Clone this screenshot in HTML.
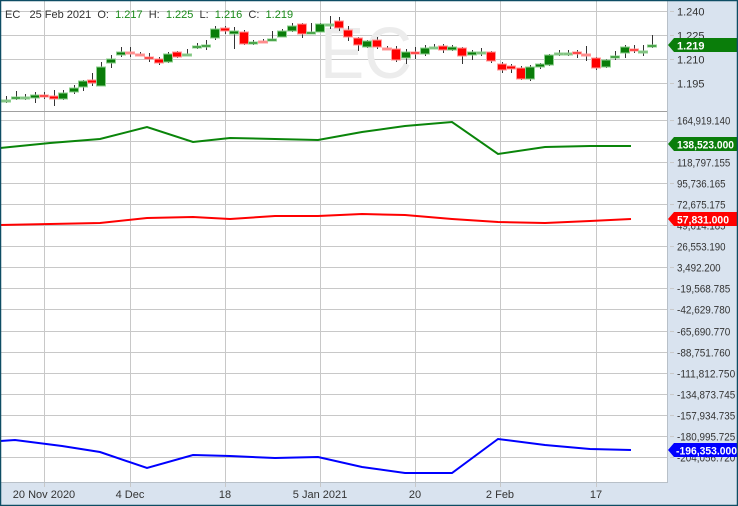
<!DOCTYPE html>
<html><head><meta charset="utf-8"><style>
html,body{margin:0;padding:0;background:#fff;}
#c{position:relative;width:738px;height:506px;overflow:hidden;font-family:"Liberation Sans",sans-serif;}
svg text{font-family:"Liberation Sans",sans-serif;}
</style></head><body><div id="c">
<svg id="s" width="738" height="506" xmlns="http://www.w3.org/2000/svg">
<rect x="0" y="0" width="738" height="506" fill="#fff"/>
<rect x="668" y="0" width="70" height="506" fill="#d9e3ef"/>
<rect x="0" y="483" width="738" height="23" fill="#d9e3ef"/>
<g id="grid" stroke="#c8c8c8" stroke-width="1"></g>
<line x1="0" y1="111.5" x2="668" y2="111.5" stroke="#a0a0a0"/>
<line x1="667.5" y1="0" x2="667.5" y2="483" stroke="#b8c0c8"/>
<line x1="0" y1="482.5" x2="668" y2="482.5" stroke="#b8c0c8"/>
<text x="320" y="78" font-size="72" fill="#ececec" textLength="92" lengthAdjust="spacingAndGlyphs">EC</text>
<g id="cand"></g>
<polyline fill="none" stroke="#0a850a" stroke-width="2" points="0,148 50,143 100,139 147,127 193,142 230,138 275,139 318,140 362,132 405,126 452,122 498,154 545,147 590,146 631,146"/>
<polyline fill="none" stroke="#ff0000" stroke-width="2" points="0,225 50,224 100,223 147,218 193,217 230,219 275,216 318,216 362,214 405,215 452,219 498,222 545,223 590,221 631,219"/>
<polyline fill="none" stroke="#0000ff" stroke-width="2" points="0,441 15,440 62,446 100,452 147,468 193,455 230,456 275,458 318,457 362,467 405,473 452,473 498,439 545,445 590,449 631,450"/>
<g id="lab" font-size="11" fill="#333"></g>
<text x="5" y="18" font-size="11" fill="#333">EC&#160;&#160;&#160;25 Feb 2021&#160;&#160;O:&#160;&#160;<tspan fill="#1a8a1a">1.217</tspan>&#160;&#160;H:&#160;&#160;<tspan fill="#1a8a1a">1.225</tspan>&#160;&#160;L:&#160;&#160;<tspan fill="#1a8a1a">1.216</tspan>&#160;&#160;C:&#160;&#160;<tspan fill="#1a8a1a">1.219</tspan></text>
<polygon points="668,45 674,38 738,38 738,52 674,52" fill="#0a7d0a"/>
<text x="677" y="49.5" font-size="11" font-weight="bold" fill="#fff">1.219</text>
<polygon points="668,144 674,137 738,137 738,151 674,151" fill="#0a7d0a"/>
<text x="677" y="148.5" font-size="11" font-weight="bold" fill="#fff" textLength="57" lengthAdjust="spacingAndGlyphs">138,523.000</text>
<polygon points="668,219 674,212 738,212 738,226 674,226" fill="#ff0000"/>
<text x="677" y="223.5" font-size="11" font-weight="bold" fill="#fff" textLength="52" lengthAdjust="spacingAndGlyphs">57,831.000</text>
<polygon points="668,450 674,443 738,443 738,457 674,457" fill="#0000ff"/>
<text x="676" y="454.5" font-size="11" font-weight="bold" fill="#fff" textLength="61" lengthAdjust="spacingAndGlyphs">-196,353.000</text>
<rect x="0.5" y="0.5" width="737" height="505" fill="none" stroke="#0e4d64" stroke-width="1.5"/>
</svg>
<script>
var NS="http://www.w3.org/2000/svg";
function el(p,t,a){var e=document.createElementNS(NS,t);for(var k in a)e.setAttribute(k,a[k]);p.appendChild(e);return e;}
var g=document.getElementById('grid'),lab=document.getElementById('lab');
var vx=[44,130,225,320,415,500,596],vl=["20 Nov 2020","4 Dec","18","5 Jan 2021","20","2 Feb","17"];
vx.forEach(function(x,i){el(g,'line',{x1:x+.5,y1:0,x2:x+.5,y2:487});var t=el(lab,'text',{x:x,y:498,'text-anchor':'middle'});t.textContent=vl[i];});
function ylab(y,s){el(g,'line',{x1:0,y1:y,x2:668,y2:y});el(g,'line',{x1:670,y1:y,x2:674,y2:y});var t=el(lab,'text',{x:677,y:y+4});if(s.length>5){t.setAttribute('textLength',(s.length*4.85).toFixed(1));t.setAttribute('lengthAdjust','spacingAndGlyphs');}t.textContent=s;}
[[11,"1.240"],[35,"1.225"],[59,"1.210"],[83,"1.195"]].forEach(function(a){ylab(a[0]+.5,a[1]);});
var L=["164,919.140","141,858.150","118,797.155","95,736.165","72,675.175","49,614.185","26,553.190","3,492.200","-19,568.785","-42,629.780","-65,690.770","-88,751.760","-111,812.750","-134,873.745","-157,934.735","-180,995.725","-204,056.720"];
L.forEach(function(s,i){ylab(Math.round(119.5+21.1*i)+.5,s);});
var C=[[6,100,100,96,103,'d'],[16,97,98,91,100,'g'],[25,97,97,94,100,'d'],[35,95,98,92,103,'g'],[44,95,96,92,99,'r'],[54,96,99,90,106,'r'],[63,93,99,90,100,'g'],[74,88,92,85,94,'g'],[83,81,87,80,91,'g'],[92,80,83,73,86,'r'],[101,67,86,62,86,'g'],[111,59,63,55,68,'g'],[121,52,55,47,57,'g'],[130,52,53,47,57,'dr'],[140,54,55,52,56,'dr'],[149,57,58,53,62,'r'],[159,59,63,57,65,'r'],[168,54,62,52,63,'g'],[177,52,57,51,58,'r'],[187,54,55,49,56,'d'],[197,46,47,43,49,'g'],[206,45,46,40,50,'g'],[215,29,38,26,40,'g'],[225,28,31,26,34,'r'],[234,31,34,27,49,'g'],[244,32,44,30,45,'r'],[253,42,44,40,45,'g'],[263,41,42,39,43,'dr'],[272,39,40,31,41,'g'],[282,31,37,29,37,'g'],[292,26,31,23,32,'g'],[302,24,34,23,38,'r'],[311,32,34,23,34,'g'],[320,24,32,23,32,'g'],[330,24,25,16,29,'d'],[339,21,28,17,31,'r'],[348,30,37,26,41,'r'],[358,38,45,37,51,'r'],[367,41,47,40,48,'g'],[377,40,47,37,49,'r'],[387,48,49,46,50,'dr'],[396,49,60,46,62,'r'],[406,52,58,49,64,'g'],[415,52,54,47,59,'r'],[425,48,54,45,56,'g'],[434,47,48,44,49,'d'],[443,46,50,44,53,'r'],[452,47,50,45,51,'g'],[462,48,56,47,64,'r'],[472,52,55,50,60,'g'],[481,52,53,48,56,'d'],[491,52,61,51,63,'r'],[502,64,70,62,73,'r'],[511,66,69,64,73,'r'],[521,68,79,66,80,'r'],[530,67,79,65,81,'g'],[540,64,67,63,69,'g'],[549,55,65,54,66,'g'],[559,53,54,50,56,'d'],[568,53,54,50,56,'d'],[577,52,54,50,58,'r'],[586,54,55,46,61,'dr'],[596,58,68,57,70,'r'],[606,60,67,59,68,'g'],[615,56,58,51,60,'g'],[625,47,53,45,58,'g'],[634,49,51,45,53,'r'],[643,51,52,45,56,'d'],[652,45,46,35,48,'g']];
var cg=document.getElementById('cand');
C.forEach(function(c){var x=c[0],col=c[5];
el(cg,'line',{x1:x+.5,y1:c[3],x2:x+.5,y2:c[4],stroke:'#333','stroke-width':1});
var f=col=='g'?'#0a7d0a':col=='r'?'#ff0000':col=='d'?'#7ab87a':'#ff8080';
var st=col=='g'||col=='d'?'#8fd08f':'#ff9a9a';
el(cg,'rect',{x:x-4.5,y:c[1],width:9,height:Math.max(2,c[2]-c[1]),fill:f,stroke:st,'stroke-width':1});});
</script>
</div></body></html>
